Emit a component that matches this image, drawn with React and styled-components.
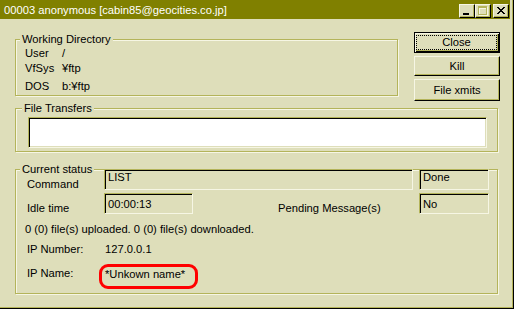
import React from "react";
import styled, { createGlobalStyle } from "styled-components";

const FACE = "#DEDEBA";
const HL = "#F6F6E4";
const SHADOW = "#B4B45A";
const DARK = "#000000";
const TITLE = "#808000";

const GlobalStyle = createGlobalStyle`
  html, body { margin: 0; padding: 0; background: ${FACE}; }
  body {
    font-family: "Liberation Sans", Arial, sans-serif;
    font-size: 11.2px;
    color: #000;
  }
`;

const Window = styled.div`
  box-sizing: border-box;
  width: 514px;
  height: 309px;
  background: ${FACE};
  border-right: 1px solid ${DARK};
  border-bottom: 1px solid ${DARK};
  box-shadow: inset -1px -1px 0 ${SHADOW};
  display: flex;
  flex-direction: column;
`;

const TitleBar = styled.div`
  height: 19px;
  width: 510px;
  background: ${TITLE};
  display: flex;
  align-items: flex-start;
  color: #fff;
`;

const TitleText = styled.div`
  margin: 3px 0 0 4px;
  line-height: 15px;
  white-space: nowrap;
`;

const CaptionButtons = styled.div`
  margin-left: auto;
  margin-top: 4px;
  margin-right: 1px;
  display: flex;
`;

const CaptionButton = styled.div`
  box-sizing: border-box;
  width: 16px;
  height: 14px;
  margin-left: ${(p) => p.$ml || 0}px;
  background: ${FACE};
  border: 1px solid;
  border-color: ${HL} ${DARK} ${DARK} ${HL};
  box-shadow: inset -1px -1px 0 ${SHADOW};
  display: flex;
  align-items: flex-start;
  justify-content: flex-start;
  svg { display: block; }
`;

const Body = styled.div`
  display: flex;
  flex-direction: column;
  padding-left: 15px;
`;

const TopRow = styled.div`
  display: flex;
  align-items: flex-start;
  padding-top: 13px;
`;

const Group = styled.div`
  position: relative;
  box-sizing: border-box;
  width: ${(p) => p.$w}px;
  height: ${(p) => p.$h}px;
  margin-top: ${(p) => p.$mt || 0}px;
  border: 1px solid ${SHADOW};
  box-shadow: inset 1px 1px 0 ${HL}, 1px 1px 0 ${HL};
`;

const Legend = styled.div`
  position: absolute;
  top: -7px;
  left: ${(p) => p.$left || 4}px;
  padding: 0 2px;
  line-height: 13px;
  background: ${FACE};
  white-space: nowrap;
`;

const DirList = styled.div`
  display: grid;
  grid-template-columns: 37px auto;
  padding: 6px 0 0 9px;
`;

const DirRow = styled.div`
  display: contents;
  & > span {
    line-height: 15px;
    margin-top: ${(p) => p.$mt || 0}px;
  }
`;

const ButtonColumn = styled.div`
  display: flex;
  flex-direction: column;
  gap: 3px;
  margin-left: 16px;
`;

const Button = styled.div`
  box-sizing: border-box;
  width: 86px;
  height: ${(p) => p.$h}px;
  background: ${FACE};
  border: 1px solid;
  border-color: ${(p) => (p.$default ? `${DARK}` : `${HL} ${DARK} ${DARK} ${HL}`)};
  box-shadow: ${(p) =>
    p.$default
      ? `inset 1px 1px 0 ${HL}, inset -1px -1px 0 ${DARK}, inset -2px -2px 0 ${SHADOW}`
      : `inset -1px -1px 0 ${SHADOW}`};
  padding: ${(p) => (p.$default ? "2px 2px 2px 1px" : "0")};
  display: flex;
  align-items: center;
  justify-content: center;
  line-height: 13px;
`;

const FocusBox = styled.div`
  flex: 1;
  align-self: stretch;
  border: 1px dotted #000;
  display: flex;
  align-items: center;
  justify-content: center;
`;

const TransferGroupInner = styled.div`
  box-sizing: border-box;
  height: 100%;
  padding: 8px 10px 3px 12px;
`;

const ListBox = styled.div`
  box-sizing: border-box;
  height: 31px;
  background: #fff;
  border: 1px solid;
  border-color: ${SHADOW} ${HL} ${HL} ${SHADOW};
  box-shadow: inset 1px 1px 0 ${DARK}, inset -1px -1px 0 ${FACE};
`;

const StatusGrid = styled.div`
  display: grid;
  grid-template-columns: 88px 89px 85px 135px 76px;
  grid-template-rows: 21px 21px;
  row-gap: 3px;
  margin-top: -1px;
`;

const StatusLabel = styled.div`
  grid-column: ${(p) => p.$col};
  grid-row: ${(p) => p.$row};
  padding: 8px 0 0 ${(p) => p.$pl || 0}px;
  line-height: 15px;
  white-space: nowrap;
`;

const Field = styled.div`
  grid-column: ${(p) => p.$col};
  grid-row: ${(p) => p.$row};
  justify-self: ${(p) => (p.$end ? "end" : "stretch")};
  box-sizing: border-box;
  width: ${(p) => (p.$w ? `${p.$w}px` : "auto")};
  height: 21px;
  border: 1px solid;
  border-color: ${SHADOW} ${HL} ${HL} ${SHADOW};
  box-shadow: inset 1px 1px 0 ${DARK}, inset -1px -1px 0 ${FACE};
  padding: ${(p) => p.$pt}px 0 0 3px;
  line-height: 13px;
  white-space: nowrap;
`;

const Summary = styled.div`
  margin: 8px 0 0 9px;
  line-height: 15px;
  white-space: nowrap;
`;

const InfoRow = styled.div`
  display: grid;
  grid-template-columns: 78px auto;
  align-items: start;
  margin-top: ${(p) => p.$mt}px;
  padding-left: 11px;
  line-height: 15px;
`;

const InfoLabel = styled.span`
  padding-top: ${(p) => p.$pt || 0}px;
`;

const Highlighted = styled.span`
  box-sizing: border-box;
  justify-self: start;
  width: 99px;
  height: 25px;
  margin-left: -6px;
  padding: 0 0 0 3px;
  border: 3px solid #ff0000;
  border-radius: 9px;
  line-height: 15px;
  white-space: nowrap;
`;

const MinIcon = () => (
  <svg width="14" height="12" viewBox="0 0 14 12">
    <rect x="3" y="8" width="6" height="2" fill="#000" />
  </svg>
);

const MaxIcon = () => (
  <svg width="14" height="12" viewBox="0 0 14 12" shapeRendering="crispEdges">
    <path d="M3 2h9v9h-9z M4 4h7v6h-7z" fill={HL} fillRule="evenodd" />
    <path d="M2 1h9v9h-9z M3 3h7v6h-7z" fill={SHADOW} fillRule="evenodd" />
  </svg>
);

const CloseIcon = () => (
  <svg width="14" height="12" viewBox="0 0 14 12" shapeRendering="crispEdges">
    <path
      d="M3 2h2v1h-2z M9 2h2v1h-2z M4 3h2v1h-2z M8 3h2v1h-2z M5 4h4v1h-4z M6 5h2v1h-2z M5 6h4v1h-4z M4 7h2v1h-2z M8 7h2v1h-2z M3 8h2v1h-2z M9 8h2v1h-2z"
      fill="#000"
    />
  </svg>
);

export default function App() {
  return (
    <>
      <GlobalStyle />
      <Window>
        <TitleBar>
          <TitleText>00003 anonymous [cabin85@geocities.co.jp]</TitleText>
          <CaptionButtons>
            <CaptionButton>
              <MinIcon />
            </CaptionButton>
            <CaptionButton>
              <MaxIcon />
            </CaptionButton>
            <CaptionButton $ml={2}>
              <CloseIcon />
            </CaptionButton>
          </CaptionButtons>
        </TitleBar>
        <Body>
          <TopRow>
            <Group $w={383} $h={57} $mt={7}>
              <Legend>Working Directory</Legend>
              <DirList>
                <DirRow>
                  <span>User</span>
                  <span>/</span>
                </DirRow>
                <DirRow>
                  <span>VfSys</span>
                  <span>¥ftp</span>
                </DirRow>
                <DirRow $mt={3}>
                  <span>DOS</span>
                  <span>b:¥ftp</span>
                </DirRow>
              </DirList>
            </Group>
            <ButtonColumn>
              <Button $h={21} $default>
                <FocusBox>Close</FocusBox>
              </Button>
              <Button $h={20}>Kill</Button>
              <Button $h={22}>File xmits</Button>
            </ButtonColumn>
          </TopRow>
          <Group $w={483} $h={44} $mt={7}>
            <Legend $left={6}>File Transfers</Legend>
            <TransferGroupInner>
              <ListBox />
            </TransferGroupInner>
          </Group>
          <Group $w={483} $h={125} $mt={17}>
            <Legend>Current status</Legend>
            <StatusGrid>
              <StatusLabel $col="1" $row="1" $pl={11}>Command</StatusLabel>
              <Field $col="2 / 5" $row="1" $pt={1}>LIST</Field>
              <Field $col="5" $row="1" $w={70} $end $pt={1}>Done</Field>
              <StatusLabel $col="1" $row="2" $pl={11}>Idle time</StatusLabel>
              <Field $col="2" $row="2" $pt={4}>00:00:13</Field>
              <StatusLabel $col="4" $row="2">Pending Message(s)</StatusLabel>
              <Field $col="5" $row="2" $w={70} $end $pt={4}>No</Field>
            </StatusGrid>
            <Summary>0 (0) file(s) uploaded. 0 (0) file(s) downloaded.</Summary>
            <InfoRow $mt={5}>
              <InfoLabel>IP Number:</InfoLabel>
              <span>127.0.0.1</span>
            </InfoRow>
            <InfoRow $mt={7}>
              <InfoLabel $pt={2}>IP Name:</InfoLabel>
              <Highlighted>*Unkown name*</Highlighted>
            </InfoRow>
          </Group>
        </Body>
      </Window>
    </>
  );
}
